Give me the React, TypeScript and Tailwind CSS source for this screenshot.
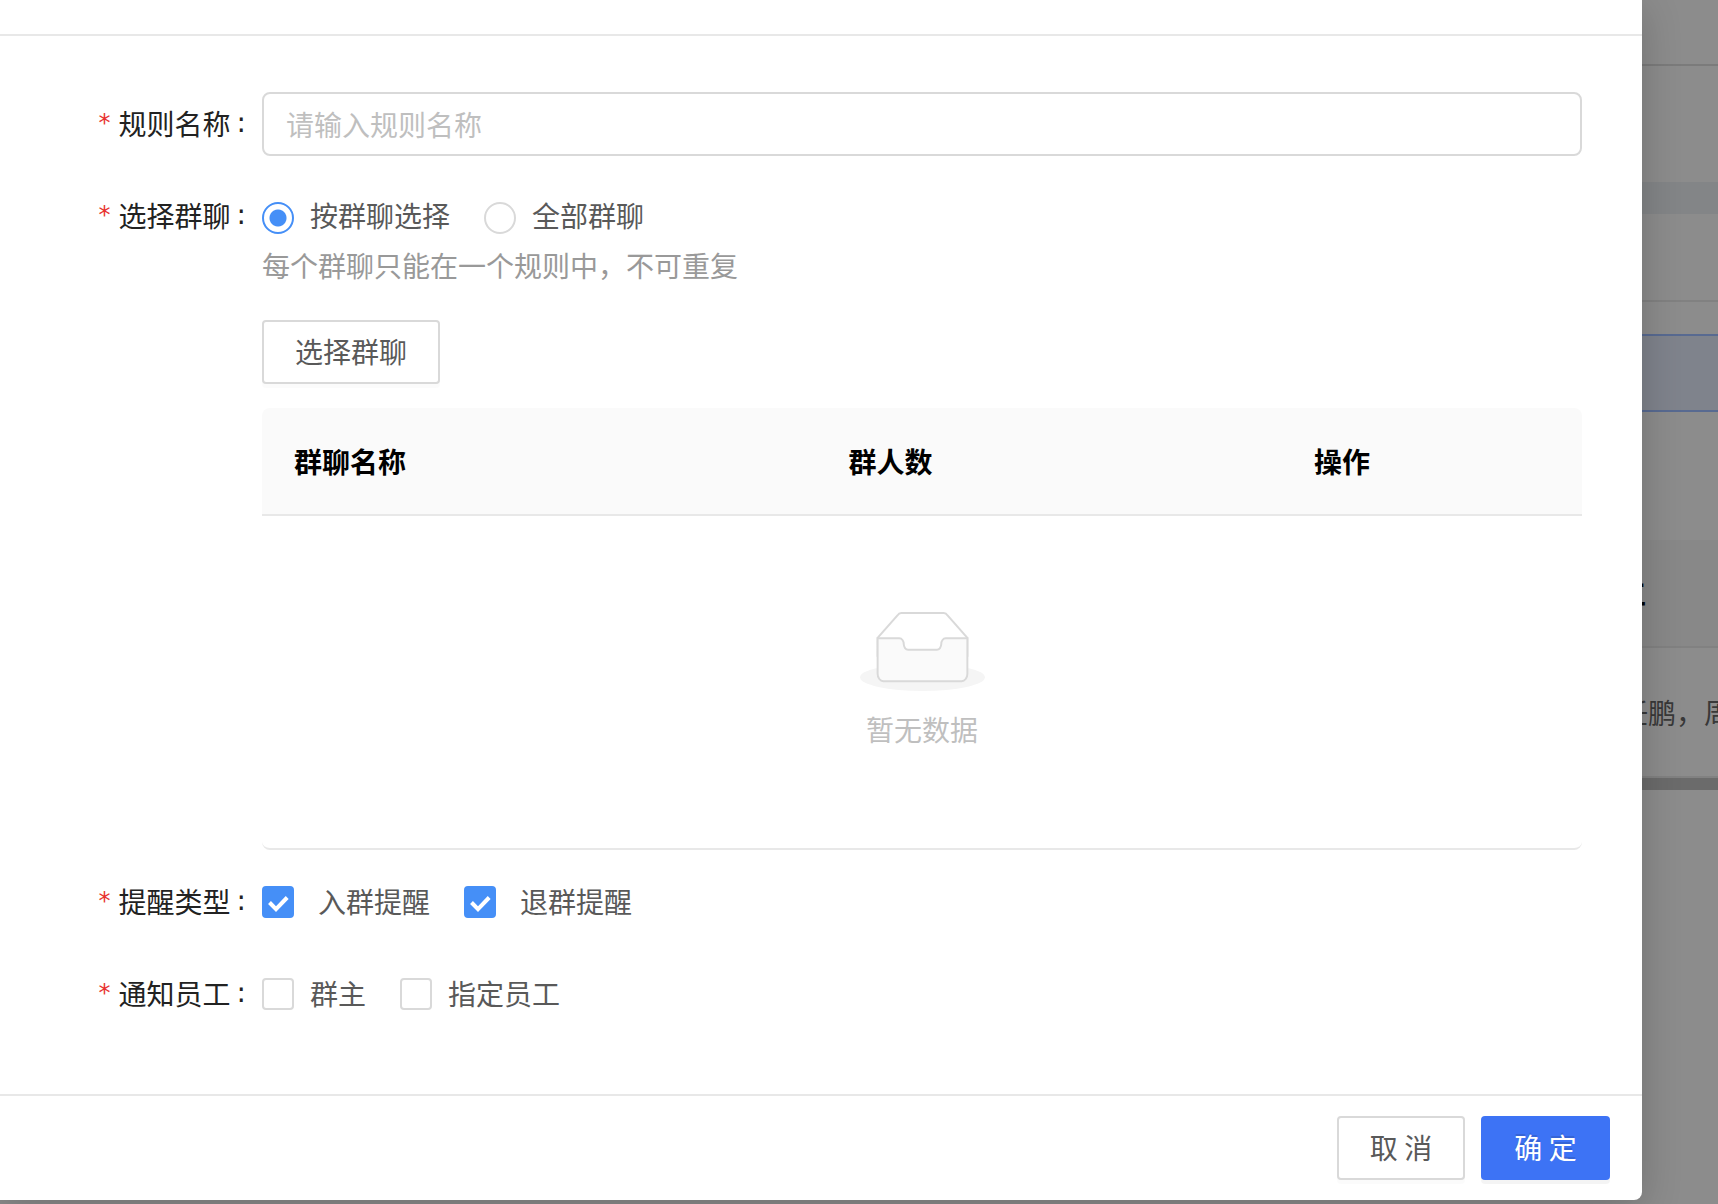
import React from "react";

function Field({ label, htmlFor, children }: { label: string; htmlFor?: string; children: React.ReactNode }) {
  return (
    <div className="flex">
      <label htmlFor={htmlFor} className="flex h-16 w-[262px] shrink-0 items-center justify-end pr-4 pb-0.5 text-[#222]">
        <span className="mr-2 font-['DejaVu_Sans'] text-2xl text-[#e8312f]">*</span>
        <span>{label}</span>
        <span className="ml-1.5 font-['DejaVu_Sans']">:</span>
      </label>
      <div className="min-w-0 flex-1 pr-[60px]">{children}</div>
    </div>
  );
}

function Radio({ label, checked }: { label: string; checked?: boolean }) {
  return (
    <label className="flex items-center gap-4">
      <input
        type="radio"
        name="scope"
        defaultChecked={checked}
        className="size-8 appearance-none rounded-full border-2 border-[#d9d9d9] bg-white checked:border-[#458ff7] checked:bg-[radial-gradient(circle,#458ff7_8px,white_9px)]"
      />
      <span className="pb-1.5">{label}</span>
    </label>
  );
}

function Check({ label, checked, wide }: { label: string; checked?: boolean; wide?: boolean }) {
  return (
    <label className={wide ? "flex items-center gap-6" : "flex items-center gap-4"}>
      <span className="relative flex size-8">
        <input
          type="checkbox"
          defaultChecked={checked}
          className="peer size-8 appearance-none rounded border-2 border-[#d9d9d9] bg-white checked:border-[#458ff7] checked:bg-[#458ff7]"
        />
        <svg
          viewBox="0 0 32 32"
          className="pointer-events-none absolute inset-0 hidden size-8 peer-checked:block"
          fill="none"
          stroke="white"
          strokeWidth="4"
        >
          <path d="M7.5 16.5L14 23.2L25.2 11.5" />
        </svg>
      </span>
      <span className="pb-0.5">{label}</span>
    </label>
  );
}

function EmptyBox() {
  return (
    <svg width="125" height="80" viewBox="0 0 64 41" aria-hidden="true">
      <g transform="translate(0 1)" fill="none" fillRule="evenodd">
        <ellipse fill="#f5f5f5" cx="32" cy="33" rx="32" ry="7" />
        <g fillRule="nonzero" stroke="#d9d9d9">
          <path d="M55 12.76L44.854 1.258C44.367.474 43.656 0 42.907 0H21.093c-.749 0-1.46.474-1.947 1.257L9 12.761V22h46v-9.24z" />
          <path
            d="M41.613 15.931c0-1.605.994-2.93 2.227-2.931H55v18.137C55 33.26 53.68 35 52.05 35h-40.1C10.32 35 9 33.259 9 31.137V13h11.16c1.233 0 2.227 1.323 2.227 2.928v.022c0 1.605 1.005 2.901 2.237 2.901h14.752c1.232 0 2.237-1.308 2.237-2.913v-.007z"
            fill="#fafafa"
          />
        </g>
      </g>
    </svg>
  );
}

function Backdrop() {
  return (
    <div className="absolute inset-0 overflow-hidden bg-[#8c8c8c]" aria-hidden="true">
      <div className="h-[66px] border-b-2 border-[#7b7b7b]" />
      <div className="h-[116px]" />
      <div className="h-8 bg-[#838587]" />
      <div className="h-[88px] border-b-2 border-[#818181]" />
      <div className="mt-8 h-[78px] border-y-2 border-[#586a91] bg-[#7f838c]" />
      <div className="mt-32 flex h-[108px] items-center justify-end border-b-2 border-[#818181] bg-[#888888] pr-[72px] font-bold text-black">
        通知员工
      </div>
      <div className="flex h-[130px] items-center border-b-2 border-[#818181] text-[#383838]">
        <span className="ml-auto w-[98px] whitespace-nowrap">任鹏，周</span>
      </div>
      <div className="h-3 bg-[#6b6b6b]" />
    </div>
  );
}

export default function App() {
  return (
    <div className="relative min-h-screen overflow-hidden pr-[76px] pb-1 font-['Noto_Sans_CJK_SC',sans-serif] text-[28px] leading-9 text-[#595959]">
      <Backdrop />
      <form className="relative rounded-br-lg bg-white shadow-[0_8px_40px_rgba(0,0,0,0.2)]">
        <div className="h-9 border-b-2 border-[#e8e8e8]" />
        <div className="pt-14 pb-[68px]">
          <Field label="规则名称" htmlFor="rule-name">
            <input
              id="rule-name"
              placeholder="请输入规则名称"
              className="h-16 w-full rounded-lg border-2 border-[#d9d9d9] bg-white px-[22px] placeholder:text-[#bfbfbf]"
            />
          </Field>
          <div className="mt-7">
            <Field label="选择群聊">
              <div className="flex h-16 items-center gap-[34px] pt-1">
                <Radio label="按群聊选择" checked />
                <Radio label="全部群聊" />
              </div>
              <p className="leading-[34px] text-[#999]">每个群聊只能在一个规则中，不可重复</p>
              <button
                type="button"
                className="mt-[38px] h-16 rounded border-2 border-[#d9d9d9] bg-white px-[31px] pb-0.5 shadow-[0_4px_0_rgba(0,0,0,0.016)]"
              >
                选择群聊
              </button>
              <table className="mt-6 w-full table-fixed border-separate border-spacing-0 text-left">
                <thead>
                  <tr className="h-[108px] text-black">
                    <th className="w-[42%] rounded-tl-lg border-b-2 border-[#e8e8e8] bg-[#fafafa] px-8">群聊名称</th>
                    <th className="border-b-2 border-[#e8e8e8] bg-[#fafafa] px-8">群人数</th>
                    <th className="w-[300px] rounded-tr-lg border-b-2 border-[#e8e8e8] bg-[#fafafa] px-8">操作</th>
                  </tr>
                </thead>
                <tbody>
                  <tr>
                    <td colSpan={3} className="h-[334px] rounded-b-lg border-b-2 border-[#e8e8e8] p-0 text-[#bfbfbf]">
                      <div className="flex flex-col items-center gap-5 pb-1.5">
                        <EmptyBox />
                        <span>暂无数据</span>
                      </div>
                    </td>
                  </tr>
                </tbody>
              </table>
            </Field>
          </div>
          <div className="mt-5">
            <Field label="提醒类型">
              <div className="flex h-16 items-center gap-[34px]">
                <Check label="入群提醒" checked wide />
                <Check label="退群提醒" checked wide />
              </div>
            </Field>
          </div>
          <div className="mt-7">
            <Field label="通知员工">
              <div className="flex h-16 items-center gap-[34px]">
                <Check label="群主" />
                <Check label="指定员工" />
              </div>
            </Field>
          </div>
        </div>
        <div className="flex justify-end gap-4 border-t-2 border-[#e8e8e8] px-8 py-5">
          <button
            type="button"
            className="h-16 w-32 rounded border-2 border-[#d9d9d9] bg-white pb-0.5 shadow-[0_4px_0_rgba(0,0,0,0.016)]"
          >
            取 消
          </button>
          <button
            type="submit"
            className="h-16 w-[129px] rounded bg-[#3d73f5] pb-0.5 text-white shadow-[0_4px_0_rgba(0,0,0,0.045)] text-shadow-[0_-2px_0_rgba(0,0,0,0.12)]"
          >
            确 定
          </button>
        </div>
      </form>
    </div>
  );
}
